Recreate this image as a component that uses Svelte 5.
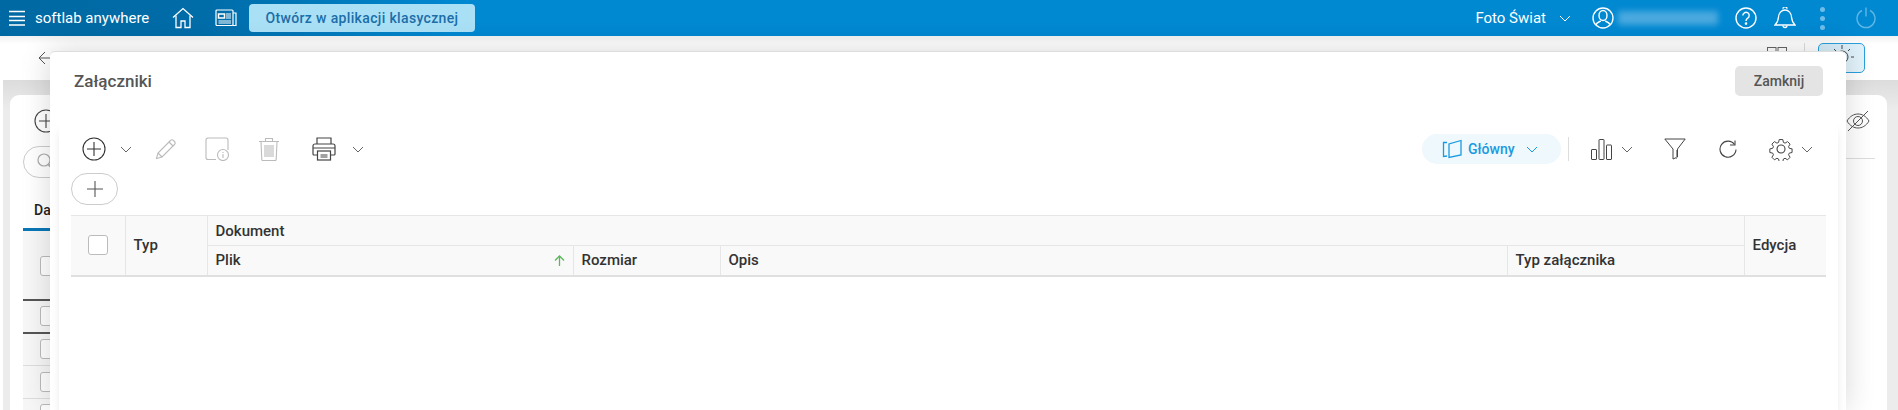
<script>
  const columns = [
    { label: "Plik", sorted: true },
    { label: "Rozmiar" },
    { label: "Opis" },
    { label: "Typ załącznika" },
  ];
</script>

<div class="page">
  <header class="topbar">
    <button class="hamburger" aria-label="Menu">
      <svg width="16" height="16" viewBox="0 0 16 16"><path d="M0 1.500h16M0 6.500h16M0 10.500h16M0 15h16" stroke="#fff" stroke-width="1.400" /></svg>
    </button>
    <span class="brand">softlab anywhere</span>
    <svg class="home" width="22" height="22" viewBox="0 0 22 22" fill="none" stroke="#fff" stroke-width="1.300">
      <path d="M1 10.500 11 1.500l10 9" />
      <path d="M4 8.500V20.500h5v-6.500h4v6.500h5V8.500" />
    </svg>
    <svg class="news" width="22" height="18" viewBox="0 0 22 18" fill="none" stroke="#fff" stroke-width="1.200">
      <rect x="1" y="1" width="17" height="15.500" rx="1" />
      <path d="M18 4h3v12.500h-3" />
      <rect x="3.500" y="5" width="6" height="4" stroke-width="1.500" />
      <path d="M11 5h5M11 7h5M11 9h5M3.500 12h12.500M3.500 14h12.500" />
    </svg>
    <button class="classic">Otwórz w aplikacji klasycznej</button>

    <div class="topbar-right">
      <span class="company">Foto Świat</span>
      <svg class="company-chev" width="12" height="7" viewBox="0 0 12 7" fill="none" stroke="#fff" stroke-width="1"><path d="M1 1l5 5 5-5" /></svg>
      <svg class="user" width="22" height="22" viewBox="0 0 22 22" fill="none" stroke="#fff" stroke-width="1.400">
        <circle cx="11" cy="11" r="10" />
        <ellipse cx="11" cy="8.500" rx="4" ry="5" />
        <path d="M3.800 18c1-2.600 3.400-3.300 5-4M18.200 18c-1-2.600-3.400-3.300-5-4" />
      </svg>
      <div class="username"></div>
      <svg class="help" width="22" height="22" viewBox="0 0 22 22" fill="none" stroke="#fff" stroke-width="1.400">
        <circle cx="11" cy="11" r="10" />
        <path d="M7.800 8.500a3.200 3.200 0 1 1 5 2.700c-1.200.8-1.800 1.400-1.800 2.800" />
        <circle cx="11" cy="16.600" r=".6" fill="#fff" />
      </svg>
      <svg class="bell" width="22" height="22" viewBox="0 0 22 22" fill="none" stroke="#fff" stroke-width="1.300">
        <path d="M1 18c2.400-2.500 3.300-4.500 3.500-8 .2-3.800 2.800-7 6.500-7s6.300 3.200 6.500 7c.2 3.500 1.100 5.500 3.500 8z" />
        <path d="M9 1.800a2 2 0 0 1 4 0M9 18.500a2 2 0 0 0 4 0" />
      </svg>
      <div class="dots"><i></i><i></i><i></i></div>
      <svg class="power" width="20" height="22" viewBox="0 0 20 22" fill="none" stroke="#5fb7e6" stroke-width="1.400">
        <path d="M6 3.500a9 9 0 1 0 8 0M10 .5v9" />
      </svg>
    </div>
  </header>

  <div class="subbar">
    <svg class="back" width="14" height="14" viewBox="0 0 14 14" fill="none" stroke="#555" stroke-width="1"><path d="M14 7H1M7 1 1 7l6 6" /></svg>
    <div class="subbar-right">
      <svg class="layout" width="20" height="20" viewBox="0 0 20 20" fill="none" stroke="#666" stroke-width="1"><rect x=".5" y=".5" width="8.500" height="19" /><rect x="11" y=".5" width="8.500" height="19" /></svg>
      <span class="sep"></span>
      <div class="sun">
        <svg width="30" height="28" viewBox="0 0 30 28" fill="none" stroke="#444" stroke-width="1">
          <circle cx="15" cy="13" r="6" />
          <path d="M15 1v4M7 5l2 2M23 5l-2 2M4 13h2M24 13h3" />
        </svg>
      </div>
    </div>
  </div>

  <main class="behind">
    <section class="card">
      <div class="card-left">
        <svg class="card-plus" width="24" height="24" viewBox="0 0 24 24" fill="none" stroke="#444" stroke-width="1.100"><circle cx="12" cy="12" r="11" /><path d="M12 5v14M5 12h14" /></svg>
        <div class="search">
          <svg width="20" height="20" viewBox="0 0 20 20" fill="none" stroke="#aaa" stroke-width="1.200"><circle cx="8" cy="8" r="6" /><path d="M12.500 12.500 18 18" stroke-width="2" /></svg>
        </div>
        <div class="tab">Dane</div>
        <div class="rows">
          <div class="row first"><span class="box"></span></div>
          <div class="row dark"><span class="box"></span></div>
          <div class="row"><span class="box"></span></div>
          <div class="row"><span class="box"></span></div>
          <div class="row"><span class="box"></span></div>
        </div>
      </div>
      <div class="card-right">
        <svg width="24" height="22" viewBox="0 0 24 22" fill="none" stroke="#555" stroke-width="1"><path d="M1 11c3-5 7-7 11-7s8 2 11 7c-3 5-7 7-11 7S4 16 1 11z" /><circle cx="12" cy="11" r="4.500" /><path d="M22 1 2 21" /></svg>
        <div class="card-right-line"></div>
      </div>
    </section>
  </main>

  <div class="modal">
    <div class="modal-head">
      <h2>Załączniki</h2>
      <button class="close">Zamknij</button>
    </div>
    <div class="modal-body">
      <div class="toolbar">
        <svg class="i-add" width="24" height="24" viewBox="0 0 24 24" fill="none" stroke="#333" stroke-width="1.100"><circle cx="12" cy="12" r="11" /><path d="M12 5v14M5 12h14" /></svg>
        <svg class="chev c-add" width="12" height="7" viewBox="0 0 12 7"><path d="M1 1l5 5 5-5" /></svg>
        <svg class="i-edit" width="22" height="22" viewBox="0 0 22 22" fill="none" stroke="#bbb" stroke-width="1.100">
          <path d="M1.500 20.500 3 15 15.500 2.500a2 2 0 0 1 3 0l1 1a2 2 0 0 1 0 3L7 19z" /><path d="M3 15l4 4M14 4l4 4" />
        </svg>
        <svg class="i-info" width="24" height="24" viewBox="0 0 24 24" fill="none" stroke="#bbb" stroke-width="1.100">
          <path d="M11 22.500H3a2 2 0 0 1-2-2V3a2 2 0 0 1 2-2h18a2 2 0 0 1 2 2v10" />
          <circle cx="18" cy="18" r="5.500" /><path d="M18 17v4M18 15v1" />
        </svg>
        <svg class="i-trash" width="22" height="24" viewBox="0 0 22 24" fill="none" stroke="#bbb" stroke-width="1.100">
          <path d="M1 4.500h20M7.500 4V1.500h7V4M3 5l.8 17.500a1 1 0 0 0 1 1h12.400a1 1 0 0 0 1-1L19 5" />
          <path d="M7 8v12M9 8v12M11 8v12M13 8v12M15 8v12" />
        </svg>
        <svg class="i-print" width="24" height="24" viewBox="0 0 24 24" fill="none" stroke="#444" stroke-width="1.200">
          <path d="M5 7V1h14v6M5 18H2a1 1 0 0 1-1-1V9a2 2 0 0 1 2-2h18a2 2 0 0 1 2 2v8a1 1 0 0 1-1 1h-3" />
          <path d="M1 11h22" />
          <rect x="5.500" y="14" width="13" height="9" /><path d="M8.500 18h7M8.500 20h7" />
        </svg>
        <svg class="chev c-print" width="12" height="7" viewBox="0 0 12 7"><path d="M1 1l5 5 5-5" /></svg>

        <div class="toolbar-right">
          <button class="view">
            <svg width="20" height="20" viewBox="0 0 20 20" fill="none" stroke="#1a9ae0" stroke-width="1.300">
              <path d="M5 3.500H1.500v14L5 17M7 18.500V5l12-3.500V16z" />
            </svg>
            Główny
            <svg class="view-chev" width="12" height="7" viewBox="0 0 12 7"><path d="M1 1l5 5 5-5" /></svg>
          </button>
          <span class="divider"></span>
          <svg class="i-chart" width="21" height="21" viewBox="0 0 21 21" fill="none" stroke="#444" stroke-width="1"><rect x=".5" y="10.500" width="5" height="10" rx=".5" /><rect x="8" y=".5" width="5" height="20" rx=".5" /><rect x="15.500" y="6" width="5" height="14.500" rx=".5" /></svg>
          <svg class="chev c-chart" width="12" height="7" viewBox="0 0 12 7"><path d="M1 1l5 5 5-5" /></svg>
          <svg class="i-filter" width="22" height="22" viewBox="0 0 22 22" fill="none" stroke="#444" stroke-width="1"><path d="M.8 1h20.400L13.500 11v8l-4.500 2V11z" /><path d="M12.500 12v9" stroke="#999" /></svg>
          <svg class="i-refresh" width="18" height="18" viewBox="0 0 18 18" fill="none" stroke="#444" stroke-width="1.100"><path d="M15.500 4.500A8 8 0 1 0 17 9.500" /><path d="M16 .5v4.500h-5" /></svg>
          <svg class="i-gear" width="24" height="24" viewBox="0 0 24 24" fill="none" stroke="#444" stroke-width="1.100">
            <circle cx="12" cy="12" r="4" />
            <path d="M10 1.500h4l.7 3.200 1.800.8 2.800-1.700 2.800 2.800-1.700 2.800.8 1.800 3.200.7v0l-.1 0v4l-3.100.7-.8 1.800 1.700 2.800-2.800 2.800-2.800-1.700-1.800.8-.7 3.100h-4l-.7-3.100-1.800-.8-2.800 1.700-2.800-2.800 1.700-2.800-.8-1.800-3.200-.7v-4l3.200-.7.800-1.800-1.700-2.800 2.800-2.800 2.800 1.700 1.800-.8z" transform="translate(1.200 1.200) scale(.9)" />
          </svg>
          <svg class="chev c-gear" width="12" height="7" viewBox="0 0 12 7"><path d="M1 1l5 5 5-5" /></svg>
        </div>
      </div>

      <button class="add-row" aria-label="Dodaj">
        <svg width="16" height="16" viewBox="0 0 16 16" stroke="#555" stroke-width="1.100"><path d="M8 0v16M0 8h16" /></svg>
      </button>

      <table>
        <colgroup>
          <col style="width:54px" />
          <col style="width:82px" />
          <col style="width:366px" />
          <col style="width:147px" />
          <col style="width:787px" />
          <col style="width:237px" />
          <col style="width:82px" />
        </colgroup>
        <thead>
          <tr>
            <th rowspan="2" class="check"><span class="box"></span></th>
            <th rowspan="2">Typ</th>
            <th colspan="4">Dokument</th>
            <th rowspan="2">Edycja</th>
          </tr>
          <tr>
            {#each columns as col}
              <th>
                <div class="cell">
                  {col.label}
                  {#if col.sorted}
                    <svg width="11" height="11" viewBox="0 0 11 11" fill="none" stroke="#5cb85c" stroke-width="1.300"><path d="M5.500 11V1M1 5.500l4.500-4.500 4.500 4.500" /></svg>
                  {/if}
                </div>
              </th>
            {/each}
          </tr>
        </thead>
      </table>
    </div>
  </div>
</div>

<style>
  :global(body) {
    margin: 0;
  }

  .page {
    position: relative;
    width: 1898px;
    height: 410px;
    overflow: hidden;
    background: #fff;
    font-family: Roboto, "Noto Sans", sans-serif;
    display: flex;
    flex-direction: column;
  }

  button {
    font-family: inherit;
    border: 0;
    padding: 0;
    background: none;
  }

  .topbar {
    height: 36px;
    flex: none;
    display: flex;
    align-items: center;
    background: linear-gradient(90deg, #0069a3 0, #006ca8 200px, #0088d1 460px);
    color: #fff;
  }

  .hamburger {
    display: flex;
    margin-left: 9px;
  }

  .brand {
    margin-left: 10px;
    font-size: 15px;
    width: 137px;
  }

  .news {
    margin-left: 21px;
  }

  .classic {
    margin-left: 12px;
    width: 226px;
    height: 28px;
    background: #aae0f6;
    border-radius: 4px;
    color: #1b6ea8;
    font-size: 14px;
    font-weight: 500;
    letter-spacing: 0.35px;
  }

  .topbar-right {
    margin-left: auto;
    display: flex;
    align-items: center;
    padding-right: 22px;
  }

  .company {
    font-size: 15px;
  }

  .company-chev {
    margin-left: 13px;
  }

  .user {
    margin-left: 21px;
  }

  .username {
    width: 100px;
    height: 14px;
    margin: 0 17px 0 4px;
    background: #4aa9df;
    filter: blur(3px);
  }

  .bell {
    margin-left: 17px;
  }

  .dots {
    width: 6px;
    margin: 0 30px 0 24px;
    display: flex;
    flex-direction: column;
    gap: 4px;
  }

  .dots i {
    width: 5px;
    height: 5px;
    border-radius: 50%;
    background: #6dbde8;
  }

  .subbar {
    height: 44px;
    flex: none;
    display: flex;
    align-items: center;
    justify-content: space-between;
    background: linear-gradient(#f1f1f1, #fff 8px);
    padding: 0 33px 0 38px;
  }

  .subbar-right {
    display: flex;
    align-items: center;
  }

  .layout {
    margin-bottom: 2px;
  }

  .sep {
    width: 1px;
    height: 30px;
    margin: 0 13px 0 17px;
    background: #ddd;
  }

  .sun {
    width: 45px;
    height: 28px;
    display: flex;
    justify-content: center;
    background: linear-gradient(135deg, #d3ecf8, #e6f4fb);
    border: 1px solid #2a9fdc;
    border-radius: 5px;
  }

  .behind {
    flex: 1;
    margin-left: 3px;
    background: linear-gradient(#dcdcdc, #ececec 30px);
    padding: 15px 11px 0 7px;
  }

  .card {
    height: 100%;
    background: #fff;
    border-radius: 9px 9px 0 0;
    display: flex;
    justify-content: space-between;
  }

  .card-left {
    width: 27px;
    margin-left: 13px;
  }

  .card-plus {
    display: block;
    margin: 14px 0 0 11px;
  }

  .search {
    width: 80px;
    height: 32px;
    margin-top: 13px;
    box-sizing: border-box;
    border: 1px solid #ccc;
    border-radius: 16px;
    display: flex;
    align-items: center;
    padding-left: 12px;
  }

  .tab {
    margin: 20px 0 0 11px;
    font-size: 14px;
    line-height: 20px;
    font-weight: 500;
    color: #222;
    height: 30px;
    box-sizing: border-box;
    padding-top: 2px;
  }

  .rows {
    width: 80px;
    border-top: 3px solid #0a76b5;
    background: #f7f7f7;
  }

  .row {
    height: 32.500px;
    box-sizing: border-box;
    border-bottom: 1px solid #ddd;
    display: flex;
    align-items: center;
    padding-left: 17px;
  }

  .row.first {
    height: 70px;
    align-items: flex-start;
    padding-top: 25px;
    border-bottom: 2px solid #555;
  }

  .row.dark {
    border-bottom: 2px solid #555;
  }

  .card-right {
    width: 41px;
    padding-top: 15px;
    box-sizing: border-box;
  }

  .card-right svg {
    display: block;
  }

  .card-right-line {
    height: 1px;
    width: 29px;
    margin-top: 26px;
    background: #ddd;
  }

  .box {
    display: inline-block;
    box-sizing: border-box;
    width: 20px;
    height: 20px;
    background: #fff;
    border: 1px solid #bbb;
    border-radius: 3px;
  }

  .modal {
    position: absolute;
    left: 50px;
    top: 51px;
    width: 1796px;
    height: 359px;
    box-sizing: border-box;
    background: #fff;
    border-radius: 5px 5px 0 0;
    border-top: 1px solid #ddd;
    box-shadow: 0 0 30px rgba(0, 0, 0, 0.16);
    display: flex;
    flex-direction: column;
    overflow: hidden;
  }

  .modal-head {
    height: 70px;
    flex: none;
    display: flex;
    align-items: flex-start;
    justify-content: space-between;
    padding: 14px 23px 0 24px;
    box-sizing: border-box;
  }

  h2 {
    margin: 0;
    font-size: 17px;
    line-height: 30px;
    font-weight: 500;
    color: #555;
  }

  .close {
    width: 88px;
    height: 30px;
    background: #e4e4e4;
    border-radius: 5px;
    font-size: 14px;
    font-weight: 500;
    color: #555;
  }

  .modal-body {
    flex: 1;
    margin: 0 8px 0 9px;
    padding: 0 12px;
    background: #fff;
    border-radius: 8px 8px 0 0;
    box-shadow: 0 7px 9px rgba(0, 0, 0, 0.08);
  }

  .toolbar {
    height: 51px;
    display: flex;
    align-items: center;
    padding-top: 3px;
    box-sizing: border-box;
  }

  .chev,
  .view-chev {
    fill: none;
    stroke: #666;
    stroke-width: 1;
  }

  .i-add {
    margin-left: 11px;
  }

  .c-add {
    margin-left: 14px;
  }

  .i-edit {
    margin-left: 23px;
  }

  .i-info {
    margin-left: 28px;
  }

  .i-trash {
    margin-left: 29px;
  }

  .i-print {
    margin-left: 32px;
  }

  .c-print {
    margin-left: 16px;
  }

  .toolbar-right {
    margin-left: auto;
    display: flex;
    align-items: center;
    padding-right: 13px;
  }

  .view {
    width: 139px;
    height: 30px;
    background: #eef8fd;
    border-radius: 15px;
    color: #1a9ae0;
    font-size: 14px;
    font-weight: 500;
    display: flex;
    align-items: center;
    padding-left: 20px;
    box-sizing: border-box;
  }

  .view svg:first-child {
    margin-right: 6px;
  }

  .view-chev {
    margin-left: 11px;
    stroke: #1a9ae0;
  }

  .divider {
    width: 1px;
    height: 24px;
    margin: 0 22px 0 7px;
    background: #ddd;
  }

  .c-chart {
    margin-left: 9px;
  }

  .i-filter {
    margin-left: 31px;
  }

  .i-refresh {
    margin-left: 33px;
  }

  .i-gear {
    margin-left: 32px;
  }

  .c-gear {
    margin-left: 8px;
  }

  .add-row {
    display: flex;
    align-items: center;
    justify-content: center;
    width: 47px;
    height: 32px;
    border: 1px solid #ccc;
    border-radius: 16px;
    background: #fff;
    box-sizing: border-box;
  }

  table {
    table-layout: fixed;
    width: 1755px;
    margin-top: 10px;
    border-collapse: collapse;
    background: #f9f9f9;
    border-top: 1px solid #e3e3e3;
    border-bottom: 2px solid #e0e0e0;
  }

  th {
    height: 30px;
    padding: 0 8px;
    box-sizing: border-box;
    text-align: left;
    font-size: 15px;
    font-weight: 500;
    color: #333;
    border: 1px solid #e6e6e6;
  }

  th:first-child {
    border-left: 0;
  }

  tr:first-child th:last-child {
    border-right: 0;
  }

  tr:last-child th {
    border-bottom: 0;
  }

  tr:first-child th[rowspan] {
    border-bottom: 0;
  }

  th.check {
    text-align: center;
    padding: 0;
  }

  .check .box {
    vertical-align: middle;
  }

  .cell {
    display: flex;
    align-items: center;
    justify-content: space-between;
  }
</style>
